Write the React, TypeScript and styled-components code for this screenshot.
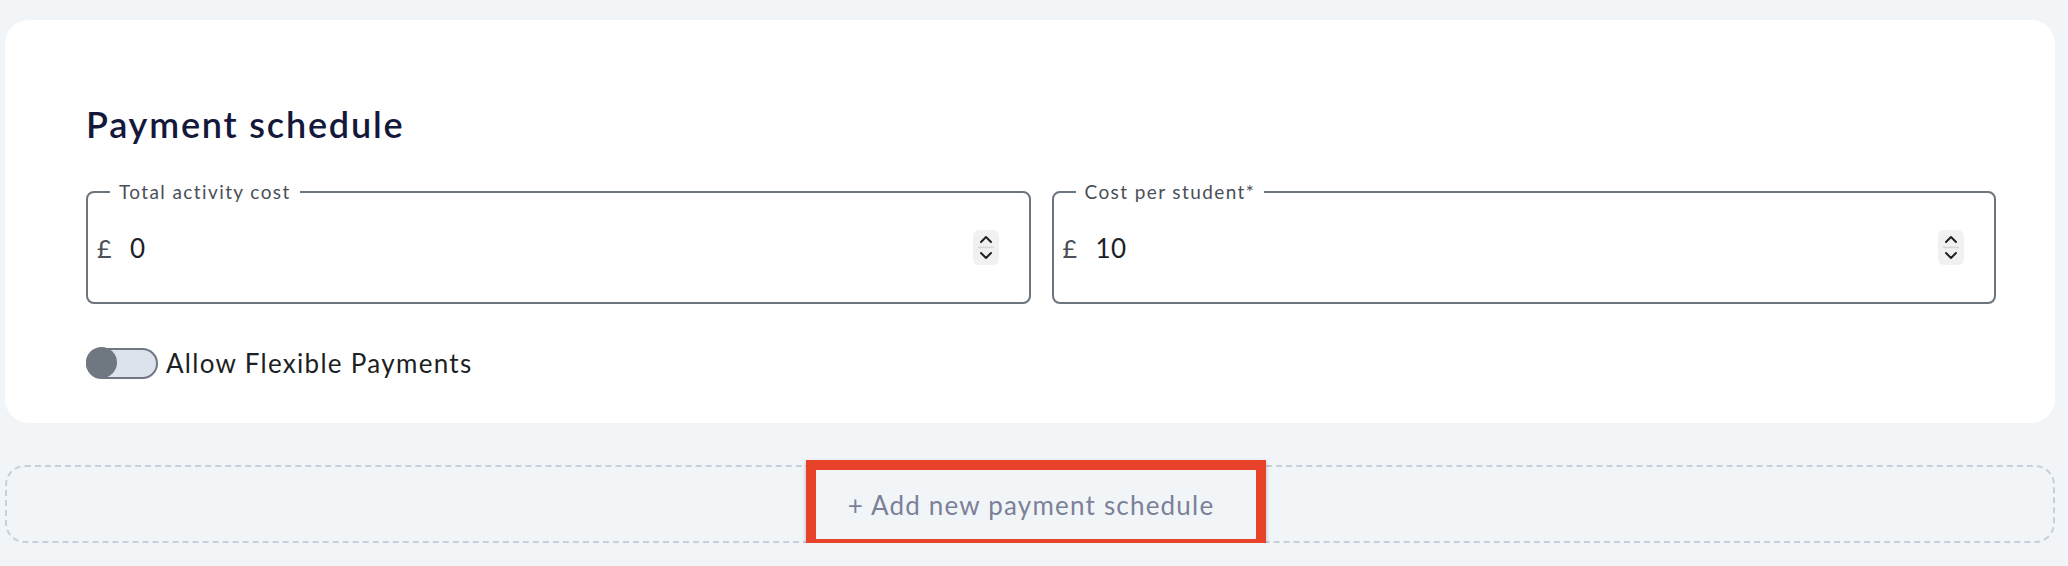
import React from "react";
import styled, { createGlobalStyle } from "styled-components";

const GlobalStyle = createGlobalStyle`
  html, body {
    margin: 0;
    padding: 0;
    background: #f2f5f8;
    font-family: "Lato", "Noto Sans", sans-serif;
  }
  * { box-sizing: border-box; }
`;

const Page = styled.div`
  display: flex;
  flex-direction: column;
  gap: 42px;
  padding: 20px 13px 0 5px;
`;

const Card = styled.section`
  background: #ffffff;
  border-radius: 24px;
  padding: 83px 59px 44px 81px;
  display: flex;
  flex-direction: column;
`;

const Heading = styled.h2`
  margin: 0;
  font-size: 36px;
  line-height: 1.2;
  font-weight: 600;
  letter-spacing: 1.8px;
  color: #14193b;
`;

const FieldRow = styled.div`
  display: grid;
  grid-template-columns: 1fr 1fr;
  gap: 21px;
  margin-top: 35px;
`;

const Field = styled.fieldset`
  margin: 0;
  padding: 0 30px 10px 8px;
  border: 2px solid #6c747e;
  border-radius: 8px;
  min-width: 0;
  display: block;
`;

const Legend = styled.legend`
  margin-left: 14px;
  padding: 0 9px;
  font-size: 19px;
  line-height: 22px;
  letter-spacing: 1.4px;
  color: #4a4f57;
`;

const InputLine = styled.div`
  height: 89px;
  display: flex;
  align-items: center;
`;

const Currency = styled.span`
  font-size: 25px;
  color: #4b5058;
  width: 34px;
  padding-left: 1px;
`;

const Value = styled.span`
  flex: 1;
  font-size: 26px;
  color: #1d2025;
  letter-spacing: 0.5px;
`;

const Spinner = styled.span`
  display: flex;
  width: 26px;
  height: 35px;
  border-radius: 6px;
  background: #f1f1f1;
`;

const ToggleRow = styled.label`
  display: flex;
  align-items: center;
  gap: 8px;
  margin-top: 43px;
  font-size: 26px;
  letter-spacing: 1.3px;
  color: #1c1f24;
`;

const Track = styled.span`
  display: flex;
  flex-shrink: 0;
  width: 72px;
  height: 31px;
  border: 2.5px solid #6f7780;
  border-radius: 999px;
  background: #dde3ec;
`;

const Knob = styled.span`
  width: 31px;
  height: 31px;
  margin: -2.5px;
  border-radius: 50%;
  background: #6f7780;
`;

const AddZone = styled.div`
  border: 2px dashed #c8cfdb;
  border-radius: 20px;
  display: flex;
  justify-content: center;
  padding-left: 12px;
`;

const AddButton = styled.button`
  width: 460px;
  height: 89px;
  flex-shrink: 0;
  margin: -7px 0 -8px;
  border: 10px solid #e8432a;
  background: #f2f5f8;
  box-shadow: 0 2px 4px rgba(0, 0, 0, 0.25);
  font-family: "Lato", "Noto Sans", sans-serif;
  font-size: 26px;
  letter-spacing: 1.2px;
  color: #7b8199;
  cursor: pointer;
  display: flex;
  align-items: center;
  justify-content: center;
  padding: 0 10px 0 0;
`;

const SpinIcon = () => (
  <svg width="26" height="35" viewBox="0 0 26 35" fill="none">
    <polyline points="8,12 13,7 18,12" stroke="#222" strokeWidth="2" strokeLinecap="round" strokeLinejoin="round" />
    <line x1="5" y1="17.5" x2="21" y2="17.5" stroke="#d6d6d6" strokeWidth="1.5" />
    <polyline points="8,23 13,28 18,23" stroke="#222" strokeWidth="2" strokeLinecap="round" strokeLinejoin="round" />
  </svg>
);

const MoneyField = ({ label, value }: { label: string; value: string }) => (
  <Field>
    <Legend>{label}</Legend>
    <InputLine>
      <Currency>£</Currency>
      <Value>{value}</Value>
      <Spinner>
        <SpinIcon />
      </Spinner>
    </InputLine>
  </Field>
);

export default function App() {
  return (
    <>
      <GlobalStyle />
      <Page>
        <Card>
          <Heading>Payment schedule</Heading>
          <FieldRow>
            <MoneyField label="Total activity cost" value="0" />
            <MoneyField label="Cost per student*" value="10" />
          </FieldRow>
          <ToggleRow>
            <Track>
              <Knob />
            </Track>
            Allow Flexible Payments
          </ToggleRow>
        </Card>
        <AddZone>
          <AddButton>+ Add new payment schedule</AddButton>
        </AddZone>
      </Page>
    </>
  );
}
